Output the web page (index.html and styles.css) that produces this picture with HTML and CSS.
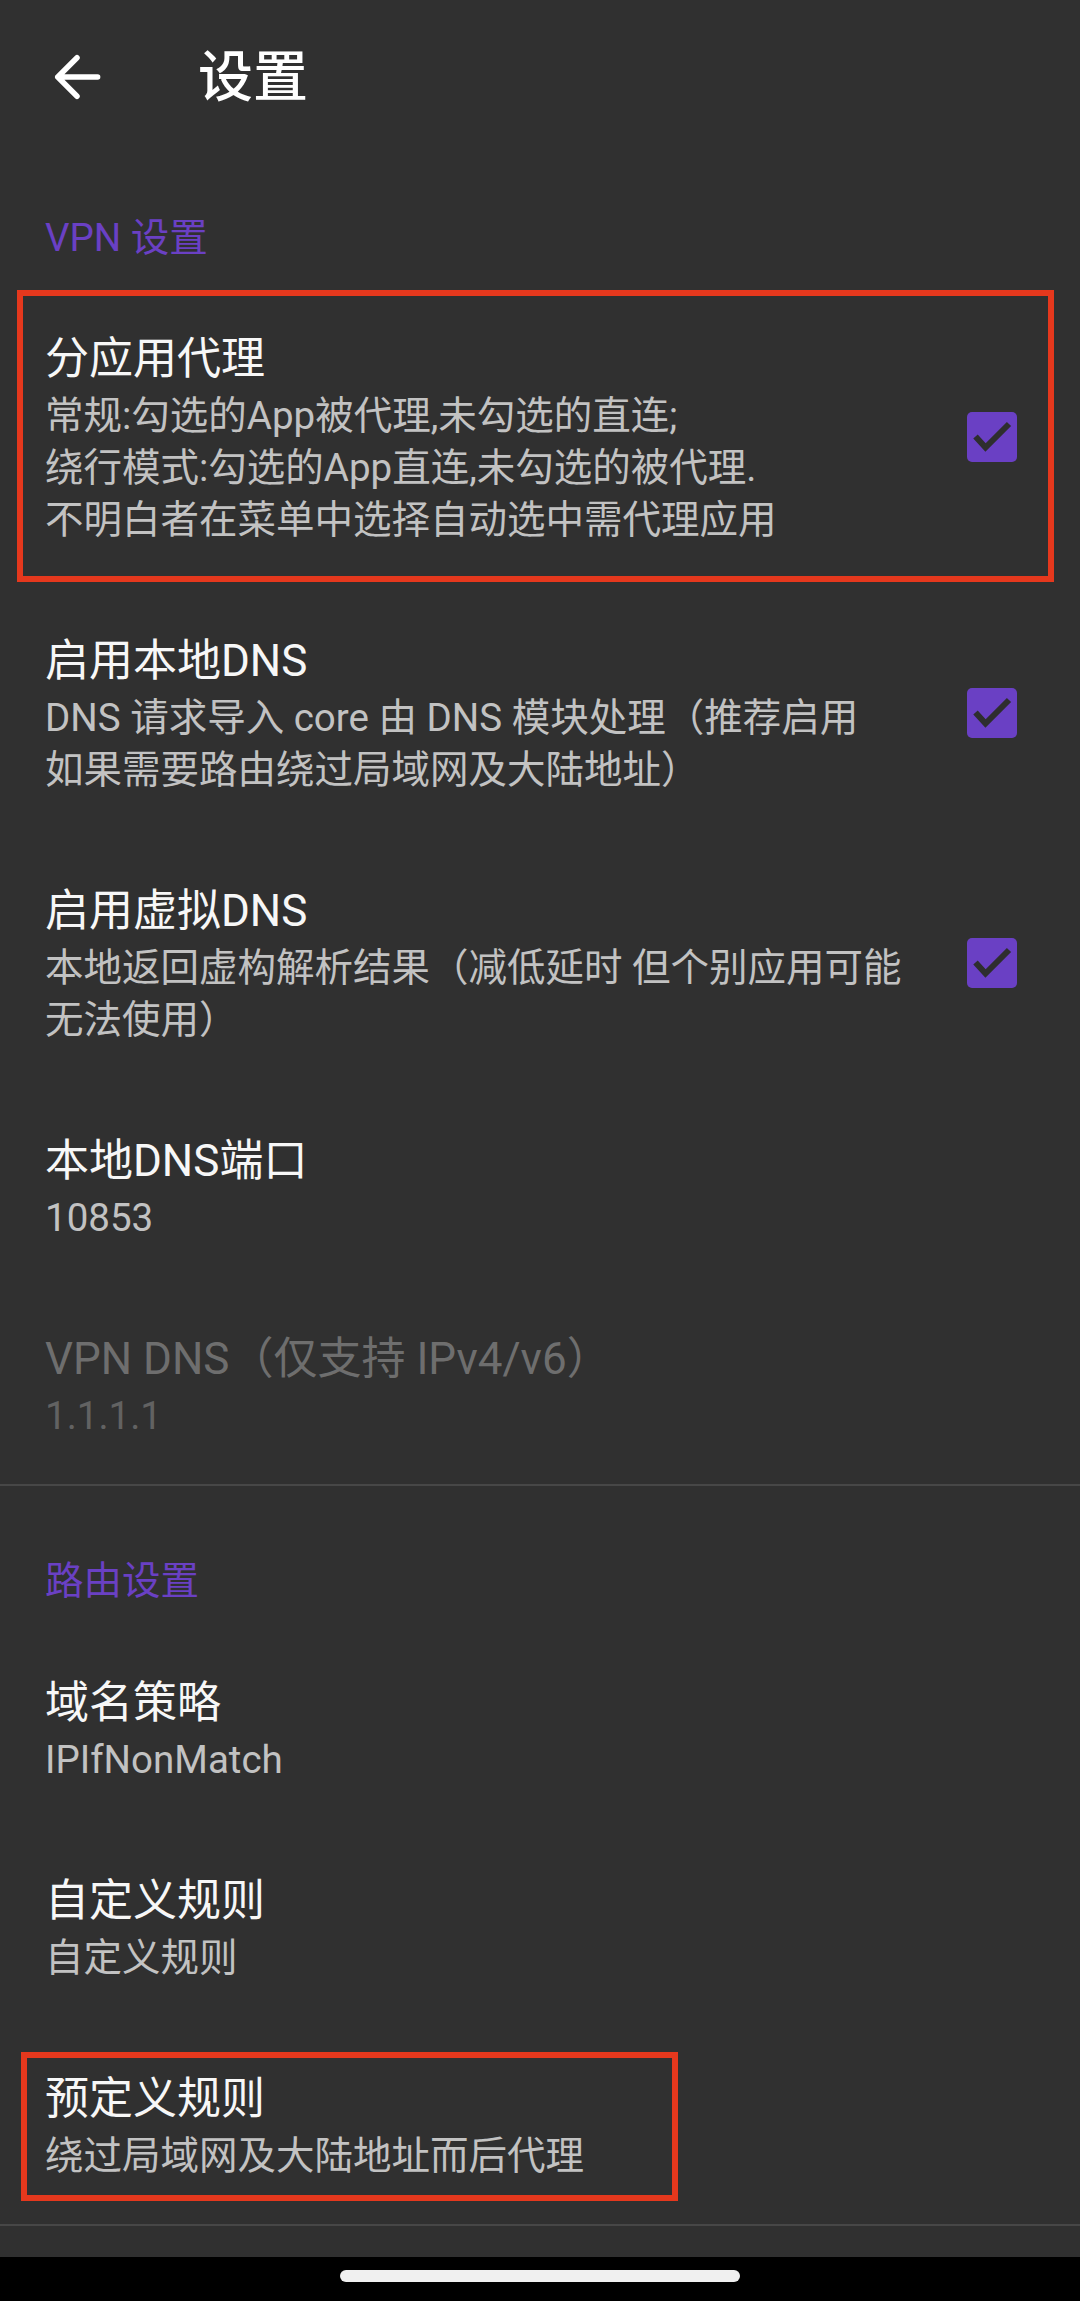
FILE: index.html
```html
<!DOCTYPE html>
<html lang="zh-CN">
<head>
<meta charset="utf-8">
<title>设置</title>
<link rel="stylesheet" href="styles.css">
</head>
<body>
<div class="app">
  <header class="toolbar">
    <svg class="back" viewBox="0 0 24 24" width="66" height="66" aria-hidden="true">
      <path d="M19.5 12H5 M12 5l-7 7 7 7" fill="none" stroke="#fff" stroke-width="2" stroke-linecap="round" stroke-linejoin="round"/>
    </svg>
    <h1 class="toolbar-title">设置</h1>
  </header>

  <main class="content">
    <div class="category category--first">VPN 设置</div>

    <div class="pref pref--marked-wide">
      <div class="pref-text">
        <div class="pref-title">分应用代理</div>
        <div class="pref-summary">常规:勾选的App被代理,未勾选的直连;<br>绕行模式:勾选的App直连,未勾选的被代理.<br>不明白者在菜单中选择自动选中需代理应用</div>
      </div>
      <svg class="checkbox" viewBox="0 0 50 50" width="50" height="50" aria-hidden="true">
        <rect x="0" y="0" width="50" height="50" rx="5" fill="#6a40c4"/>
        <polyline points="8.5,24.5 18.5,35.5 42,12" fill="none" stroke="#2e2e2e" stroke-width="6"/>
      </svg>
    </div>

    <div class="pref">
      <div class="pref-text">
        <div class="pref-title">启用本地DNS</div>
        <div class="pref-summary">DNS 请求导入 core 由 DNS 模块处理（推荐启用<br>如果需要路由绕过局域网及大陆地址）</div>
      </div>
      <svg class="checkbox" viewBox="0 0 50 50" width="50" height="50" aria-hidden="true">
        <rect x="0" y="0" width="50" height="50" rx="5" fill="#6a40c4"/>
        <polyline points="8.5,24.5 18.5,35.5 42,12" fill="none" stroke="#2e2e2e" stroke-width="6"/>
      </svg>
    </div>

    <div class="pref">
      <div class="pref-text">
        <div class="pref-title">启用虚拟DNS</div>
        <div class="pref-summary">本地返回虚构解析结果（减低延时 但个别应用可能<br>无法使用）</div>
      </div>
      <svg class="checkbox" viewBox="0 0 50 50" width="50" height="50" aria-hidden="true">
        <rect x="0" y="0" width="50" height="50" rx="5" fill="#6a40c4"/>
        <polyline points="8.5,24.5 18.5,35.5 42,12" fill="none" stroke="#2e2e2e" stroke-width="6"/>
      </svg>
    </div>

    <div class="pref">
      <div class="pref-text">
        <div class="pref-title">本地DNS端口</div>
        <div class="pref-summary">10853</div>
      </div>
    </div>

    <div class="pref pref--disabled">
      <div class="pref-text">
        <div class="pref-title">VPN DNS（仅支持 IPv4/v6）</div>
        <div class="pref-summary">1.1.1.1</div>
      </div>
    </div>

    <div class="divider"></div>

    <div class="category category--second">路由设置</div>

    <div class="pref">
      <div class="pref-text">
        <div class="pref-title">域名策略</div>
        <div class="pref-summary">IPIfNonMatch</div>
      </div>
    </div>

    <div class="pref">
      <div class="pref-text">
        <div class="pref-title">自定义规则</div>
        <div class="pref-summary">自定义规则</div>
      </div>
    </div>

    <div class="pref pref--marked-narrow">
      <div class="pref-text">
        <div class="pref-title">预定义规则</div>
        <div class="pref-summary">绕过局域网及大陆地址而后代理</div>
      </div>
    </div>

    <div class="divider"></div>
  </main>

  <div class="navbar"><div class="nav-handle"></div></div>
</div>
</body>
</html>
```

FILE: styles.css
```css
*, *::before, *::after { box-sizing: border-box; }

html, body {
  margin: 0;
  padding: 0;
  background: #303030;
}

body {
  font-family: Roboto, "Noto Sans CJK SC", "Noto Sans", sans-serif;
  color: #f5f5f5;
}

.app {
  width: 1080px;
  height: 2301px;
  display: flex;
  flex-direction: column;
  background: #303030;
  overflow: hidden;
}

.toolbar {
  height: 154px;
  flex: none;
  display: flex;
  align-items: center;
  padding-left: 44px;
}

.back {
  flex: none;
  display: block;
}

.toolbar-title {
  margin: 0 0 0 88px;
  font-size: 55px;
  font-weight: 500;
  line-height: 66px;
  color: #ffffff;
}

.content {
  flex: 1;
  display: flex;
  flex-direction: column;
}

.category {
  padding-left: 45px;
  font-size: 38.5px;
  line-height: 44px;
  color: #6a40c4;
}

.category--first {
  padding-top: 62px;
  padding-bottom: 26px;
}

.category--second {
  padding-top: 73px;
  padding-bottom: 27px;
}

.pref {
  position: relative;
  display: flex;
  align-items: center;
  padding: 42px 63px 42px 45px;
}

.pref-text {
  flex: 1;
  min-width: 0;
}

.pref-title {
  font-size: 44px;
  line-height: 62px;
  color: #f7f7f7;
  white-space: nowrap;
}

.pref-summary {
  font-size: 38.5px;
  line-height: 52px;
  color: #c2c2c2;
  white-space: nowrap;
}

.pref--disabled .pref-title { color: #6e6e6e; }
.pref--disabled .pref-summary { color: #626262; }

.checkbox {
  flex: none;
  display: block;
}

/* red annotation boxes drawn over the rows */
.pref--marked-wide::after,
.pref--marked-narrow::after {
  content: "";
  position: absolute;
  border: 6px solid #e5381d;
  pointer-events: none;
}

.pref--marked-wide::after {
  left: 17px;
  right: 26px;
  top: 4px;
  bottom: 6px;
}

.pref--marked-narrow::after {
  left: 21px;
  width: 657px;
  top: 26px;
  bottom: 23px;
}

.divider {
  height: 2px;
  background: #474747;
  flex: none;
}

.navbar {
  margin-top: auto;
  height: 44px;
  flex: none;
  background: #000;
  display: flex;
  justify-content: center;
  padding-top: 13px;
}

.nav-handle {
  width: 400px;
  height: 12px;
  border-radius: 6px;
  background: #f0f0f0;
}
```
